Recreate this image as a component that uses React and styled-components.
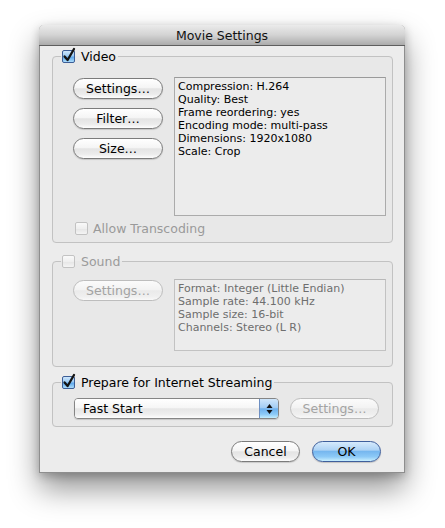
import React from 'react';
import styled, { createGlobalStyle, css } from 'styled-components';

const Global = createGlobalStyle`
  html, body { margin: 0; padding: 0; background: #ffffff; }
  body { font-family: "DejaVu Sans", "Liberation Sans", sans-serif; }
  * { box-sizing: border-box; }
`;

const Page = styled.div`
  width: 445px;
  height: 528px;
  padding: 25px 0 0 39px;
`;

const Window = styled.div`
  width: 366px;
  background: #ececec;
  border: 1px solid #8e8e8e;
  border-top: none;
  border-radius: 5px 5px 0 0;
  box-shadow: 0 16px 30px rgba(0, 0, 0, 0.42), 0 3px 10px rgba(0, 0, 0, 0.22);
`;

const TitleBar = styled.div`
  height: 21px;
  border-radius: 5px 5px 0 0;
  border-bottom: 1px solid #5e5e5e;
  background: linear-gradient(#ebebeb 0%, #d3d3d3 50%, #ababab 100%);
  display: flex;
  align-items: center;
  justify-content: center;
  font-size: 12.5px;
  color: #111;
  margin: 0 -1px;
`;

const Body = styled.div`
  padding: 3px 11px 10px 12px;
  display: flex;
  flex-direction: column;
`;

const Group = styled.fieldset`
  margin: ${(p) => p.$top}px 0 0 0;
  padding: 0;
  min-width: 0;
  border: 1px solid #c2c2c2;
  border-radius: 4px;
  background: #e8e8e8;
`;

const Legend = styled.legend`
  padding: 0 2px 0 1px;
  margin-left: 8px;
  height: 15px;
  background: transparent;
`;

const LegendInner = styled.span`
  display: flex;
  align-items: center;
  gap: 6px;
  height: 15px;
  font-size: 12.5px;
  line-height: 15px;
  color: ${(p) => (p.$disabled ? '#9b9b9b' : '#000')};
`;

const GroupInner = styled.div`
  padding: ${(p) => p.$pad};
  display: flex;
  flex-direction: column;
`;

const Row = styled.div`
  display: flex;
  align-items: flex-start;
  gap: 11px;
`;

const ButtonColumn = styled.div`
  display: flex;
  flex-direction: column;
  gap: 9px;
  margin-top: 1px;
`;

const PushButton = styled.button`
  width: ${(p) => p.$w}px;
  height: 21px;
  padding: 0;
  border-radius: 11px;
  font-family: "DejaVu Sans", sans-serif;
  font-size: 12.5px;
  line-height: 19px;
  text-align: center;
  cursor: default;
  ${(p) =>
    p.$primary
      ? css`
          border: 1px solid #3f5f9c;
          color: #000;
          background: linear-gradient(#d6eafc 0%, #aed3f5 42%, #76b7ef 50%, #8dcaf7 78%, #c9effe 100%);
          box-shadow: 0 1px 1px rgba(0, 0, 0, 0.18);
        `
      : p.disabled
      ? css`
          border: 1px solid #bdbdbd;
          color: #a3a3a3;
          background: linear-gradient(#fbfbfb 0%, #f3f3f3 45%, #eaeaea 52%, #efefef 80%, #f8f8f8 100%);
        `
      : css`
          border: 1px solid #7b7b7b;
          color: #000;
          background: linear-gradient(#ffffff 0%, #f5f5f5 45%, #e4e4e4 52%, #ececec 80%, #fdfdfd 100%);
          box-shadow: 0 1px 1px rgba(0, 0, 0, 0.15);
        `}
`;

const InfoBox = styled.div`
  width: 212px;
  height: ${(p) => p.$h}px;
  border: 1px solid ${(p) => (p.$disabled ? '#c2c2c2' : '#ababab')};
  border-top-color: ${(p) => (p.$disabled ? '#b8b8b8' : '#9a9a9a')};
  background: #ececec;
  padding: 2px 3px;
  font-size: 11px;
  line-height: 13px;
  color: ${(p) => (p.$disabled ? '#6e6e6e' : '#000')};
`;

const InfoLine = styled.div`
  white-space: nowrap;
`;

const CheckRow = styled.div`
  display: flex;
  align-items: center;
  gap: 5px;
  height: 15px;
  margin: 5px 0 0 2px;
  font-size: 12.5px;
  color: #9a9a9a;
`;

const StreamRow = styled.div`
  display: flex;
  align-items: center;
  gap: 11px;
`;

const Popup = styled.div`
  width: 205px;
  height: 21px;
  display: flex;
  border: 1px solid #858585;
  border-radius: 4px;
  overflow: hidden;
  box-shadow: 0 1px 1px rgba(0, 0, 0, 0.15);
`;

const PopupLabel = styled.div`
  flex: 1;
  padding-left: 8px;
  font-size: 12.5px;
  line-height: 19px;
  background: linear-gradient(#ffffff 0%, #f6f6f6 45%, #e6e6e6 52%, #eeeeee 80%, #fdfdfd 100%);
`;

const PopupArrows = styled.div`
  width: 19px;
  border-left: 1px solid #6d8fc2;
  background: linear-gradient(#cfe6fb 0%, #a3cdf4 45%, #6eb1ee 52%, #8ccaf7 80%, #c4eefe 100%);
  display: flex;
  align-items: center;
  justify-content: center;
`;

const Footer = styled.div`
  display: flex;
  justify-content: flex-end;
  gap: 12px;
  margin-top: 14px;
  padding-right: 12px;
`;

const Checkbox = ({ checked, disabled }) => (
  <svg width="13" height="13" viewBox="0 0 13 13" style={{ overflow: 'visible', flex: 'none' }}>
    <defs>
      <linearGradient id="cbBlue" x1="0" y1="0" x2="0" y2="1">
        <stop offset="0" stopColor="#d2e8fc" />
        <stop offset="0.45" stopColor="#9ccbf4" />
        <stop offset="0.55" stopColor="#5ea8ec" />
        <stop offset="1" stopColor="#b4e2fd" />
      </linearGradient>
      <linearGradient id="cbWhite" x1="0" y1="0" x2="0" y2="1">
        <stop offset="0" stopColor="#ffffff" />
        <stop offset="0.5" stopColor="#f1f1f1" />
        <stop offset="0.55" stopColor="#e6e6e6" />
        <stop offset="1" stopColor="#fafafa" />
      </linearGradient>
    </defs>
    <rect
      x="0.5"
      y="0.5"
      width="12"
      height="12"
      rx="1.5"
      fill={checked ? 'url(#cbBlue)' : 'url(#cbWhite)'}
      stroke={checked ? '#3d5e96' : disabled ? '#b9b9b9' : '#7a7a7a'}
      opacity={disabled ? 0.8 : 1}
    />
    {checked && (
      <path d="M2.6 6.4 L5.6 10 L12 -1" fill="none" stroke="#141414" strokeWidth="2.3" strokeLinecap="round" strokeLinejoin="round" />
    )}
  </svg>
);

const UpDown = () => (
  <svg width="7" height="12" viewBox="0 0 7 12">
    <path d="M3.5 1 L6.5 5 L0.5 5 Z" fill="#111" />
    <path d="M3.5 11 L6.5 7 L0.5 7 Z" fill="#111" />
  </svg>
);

const videoInfo = [
  'Compression: H.264',
  'Quality: Best',
  'Frame reordering: yes',
  'Encoding mode: multi-pass',
  'Dimensions: 1920x1080',
  'Scale: Crop',
];

const soundInfo = [
  'Format: Integer (Little Endian)',
  'Sample rate: 44.100 kHz',
  'Sample size: 16-bit',
  'Channels: Stereo (L R)',
];

export default function App() {
  return (
    <Page>
      <Global />
      <Window>
        <TitleBar>Movie Settings</TitleBar>
        <Body>
          <Group $top={0}>
            <Legend>
              <LegendInner>
                <Checkbox checked />
                Video
              </LegendInner>
            </Legend>
            <GroupInner $pad="13px 6px 6px 20px">
              <Row>
                <ButtonColumn>
                  <PushButton $w={90}>Settings…</PushButton>
                  <PushButton $w={90}>Filter…</PushButton>
                  <PushButton $w={90}>Size…</PushButton>
                </ButtonColumn>
                <InfoBox $h={139}>
                  {videoInfo.map((l) => (
                    <InfoLine key={l}>{l}</InfoLine>
                  ))}
                </InfoBox>
              </Row>
              <CheckRow>
                <Checkbox disabled />
                Allow Transcoding
              </CheckRow>
            </GroupInner>
          </Group>

          <Group $top={11}>
            <Legend>
              <LegendInner $disabled>
                <Checkbox disabled />
                Sound
              </LegendInner>
            </Legend>
            <GroupInner $pad="10px 6px 15px 20px">
              <Row>
                <ButtonColumn>
                  <PushButton $w={90} disabled>
                    Settings…
                  </PushButton>
                </ButtonColumn>
                <InfoBox $h={72} $disabled>
                  {soundInfo.map((l) => (
                    <InfoLine key={l}>{l}</InfoLine>
                  ))}
                </InfoBox>
              </Row>
            </GroupInner>
          </Group>

          <Group $top={8}>
            <Legend>
              <LegendInner>
                <Checkbox checked />
                Prepare for Internet Streaming
              </LegendInner>
            </Legend>
            <GroupInner $pad="8px 6px 7px 21px">
              <StreamRow>
                <Popup>
                  <PopupLabel>Fast Start</PopupLabel>
                  <PopupArrows>
                    <UpDown />
                  </PopupArrows>
                </Popup>
                <PushButton $w={89} disabled>
                  Settings…
                </PushButton>
              </StreamRow>
            </GroupInner>
          </Group>

          <Footer>
            <PushButton $w={69}>Cancel</PushButton>
            <PushButton $w={69} $primary>
              OK
            </PushButton>
          </Footer>
        </Body>
      </Window>
    </Page>
  );
}
